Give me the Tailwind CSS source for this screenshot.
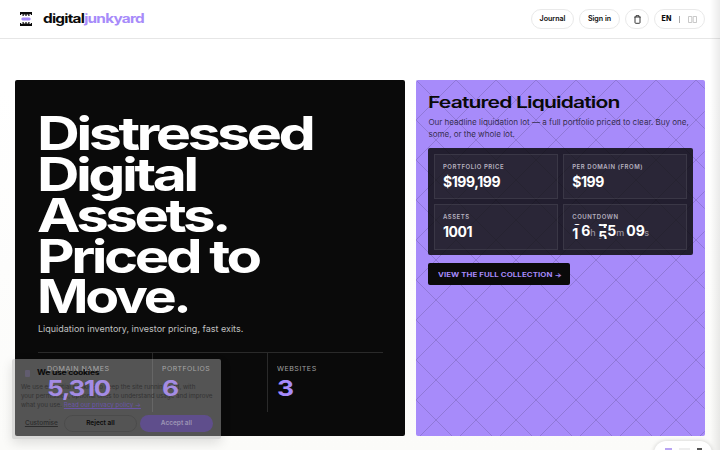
<!DOCTYPE html>
<html lang="en">
<head>
    <meta charset="UTF-8">
    <meta name="viewport" content="width=device-width, initial-scale=1.0">
    <title>digitaljunkyard</title>
    <script src="https://cdn.jsdelivr.net/npm/@tailwindcss/browser@4"></script>
</head>
<body class="h-[450px] overflow-hidden font-['Inter',sans-serif] text-[#0a0a0a]">
    <div class="relative h-[450px] overflow-hidden bg-linear-to-b from-white from-20% to-[#fbfbf9]">
        <!-- Header -->
        <header class="flex h-[39px] items-center justify-between border-b border-[#e6e6e6] bg-white pl-5 pr-[15px]">
            <a class="flex items-center">
                <svg class="h-[14px] w-3" viewBox="0 0 12 14">
                    <path d="M0 0h12v3h-1.200V2H9.500v2H8.300V2.500H6.600V4H5.400V2.500H3.700V4H2.500V2H1.200v1H0z" fill="#0a0a0a"/>
                    <path d="M0 14h12v-3h-1.200v1H9.500v-2H8.300v1.500H6.600V10H5.400v1.500H3.700V10H2.500v2H1.200v-1H0z" fill="#0a0a0a"/>
                    <path d="M2.500 5.600h7L11 7 9.500 8.400h-7L1 7z" fill="#a78bfa"/>
                </svg>
                <span class="ml-[11px] inline-block origin-left scale-x-[1.23] whitespace-nowrap text-[12.500px] font-bold leading-none tracking-[-0.05em]">digital<span class="text-[#a78bfa]">junkyard</span></span>
            </a>
            <nav class="flex items-center gap-[5px] text-[7.100px] font-semibold">
                <a class="flex h-5 w-[43px] items-center justify-center rounded-full border border-[#e9e9e9]">Journal</a>
                <a class="flex h-5 w-[41px] items-center justify-center rounded-full border border-[#e9e9e9]">Sign in</a>
                <a class="flex h-5 w-6 items-center justify-center rounded-full border border-[#e9e9e9]">
                    <svg class="h-[9px] w-[7px]" viewBox="0 0 7 9" fill="none" stroke="#222" stroke-width="0.9"><path d="M.3 2h6.400M2 2V.7h3V2M1 2v5.500q0 .8.800.8h3.400q.8 0 .8-.8V2"/></svg>
                </a>
                <div class="flex h-5 w-[51px] items-center justify-center rounded-full border border-[#e9e9e9]">
                    <span class="font-extrabold">EN</span>
                    <span class="ml-[8px] h-[7px] w-px bg-[#aaa]"></span>
                    <svg class="ml-[8px] h-[7px] w-[9px]" viewBox="0 0 9 7" fill="none" stroke="#bbb" stroke-width="0.800"><path d="M.5.500h3.300v6H.5zM5.200.500h3.300v6H5.200z"/></svg>
                </div>
            </nav>
        </header>

        <main class="flex gap-[11px] px-[15px] pt-[41.400px]">
            <!-- Hero -->
            <section class="h-[356px] w-[390.400px] rounded-[2px] bg-[#0a0a0a] px-[23px] pt-[33px] text-white">
                <h1 class="-ml-px text-[46.500px] font-bold leading-[40.700px] tracking-[-0.06em]">
                    <span class="block w-max origin-left scale-x-[1.275]">Distressed</span>
                    <span class="block w-max origin-left scale-x-[1.265]">Digital</span>
                    <span class="block w-max origin-left scale-x-[1.25]">Assets.</span>
                    <span class="block w-max origin-left scale-x-[1.25]">Priced to</span>
                    <span class="block w-max origin-left scale-x-[1.19]">Move.</span>
                </h1>
                <p class="mt-[6px] text-[9px] leading-3 text-[#c0c0c0]">Liquidation inventory, investor pricing, fast exits.</p>
                <dl class="mt-[17px] grid h-[60px] w-[345px] grid-cols-3 border-t border-[#2a2a2a]">
                    <div class="border-r border-[#2a2a2a] pl-[9px] pt-[12px]">
                        <dt class="relative z-10 w-max origin-left scale-x-[1.09] text-[6.500px] leading-2 tracking-[0.07em] text-[#a8a8a8]">DOMAIN NAMES</dt>
                        <dd class="relative z-10 mt-[3px] w-max origin-left scale-x-[1.18] text-[22px] font-bold leading-6 tracking-[-0.05em] text-[#a48ce4]">5,310</dd>
                    </div>
                    <div class="border-r border-[#2a2a2a] pl-[9px] pt-[12px]">
                        <dt class="relative z-10 w-max origin-left scale-x-[1.06] text-[6.500px] leading-2 tracking-[0.07em] text-[#a8a8a8]">PORTFOLIOS</dt>
                        <dd class="relative z-10 mt-[3px] w-max origin-left scale-x-[1.2] text-[22px] font-bold leading-6 tracking-[-0.05em] text-[#a48ce4]">6</dd>
                    </div>
                    <div class="pl-[9px] pt-[12px]">
                        <dt class="w-max origin-left scale-x-[1.09] text-[6.500px] leading-2 tracking-[0.07em] text-[#a0a0a0]">WEBSITES</dt>
                        <dd class="mt-[3px] w-max origin-left scale-x-[1.2] text-[22px] font-bold leading-6 tracking-[-0.05em] text-[#a78bfa]">3</dd>
                    </div>
                </dl>
            </section>

            <!-- Featured lot -->
            <section class="relative h-[356px] w-[288.600px] overflow-hidden rounded-[2px] bg-[#a78bfa]">
                <svg class="absolute inset-0 h-full w-full">
                    <pattern id="mesh" width="40" height="40" patternUnits="userSpaceOnUse">
                        <path d="M0 0l40 40M40 0L0 40" stroke="#0a0a0a" stroke-opacity="0.140"/>
                    </pattern>
                    <rect width="100%" height="100%" fill="url(#mesh)"/>
                </svg>
                <div class="relative px-3 pt-[12px]">
                    <h2 class="w-max origin-left scale-x-[1.315] text-[16px] font-semibold leading-5 tracking-[-0.04em]">Featured Liquidation</h2>
                    <p class="mt-[4px] whitespace-nowrap text-[8.100px] leading-3 tracking-[-0.004em] text-[#0a0a0a]/75">Our headline liquidation lot — a full portfolio priced to clear. Buy one,<br>some, or the whole lot.</p>
                    <div class="mt-2 grid h-[107px] grid-cols-2 gap-[5px] rounded-[2px] bg-[#0a0a0a]/85 p-[5.500px]">
                        <div class="border border-white/8 bg-white/4 pl-2 pt-[8px]">
                            <p class="text-[6px] font-semibold leading-2 tracking-[0.09em] text-[#b5b0bf]">PORTFOLIO PRICE</p>
                            <p class="mt-[2px] text-[14px] font-bold leading-[18px] tracking-[-0.03em] text-white">$199,199</p>
                        </div>
                        <div class="border border-white/8 bg-white/4 pl-2 pt-[8px]">
                            <p class="text-[6px] font-semibold leading-2 tracking-[0.09em] text-[#b5b0bf]">PER DOMAIN (FROM)</p>
                            <p class="mt-[2px] text-[14px] font-bold leading-[18px] tracking-[-0.03em] text-white">$199</p>
                        </div>
                        <div class="border border-white/8 bg-white/4 pl-2 pt-[8px]">
                            <p class="text-[6px] font-semibold leading-2 tracking-[0.09em] text-[#b5b0bf]">ASSETS</p>
                            <p class="mt-[2px] text-[14px] font-bold leading-[18px] tracking-[-0.03em] text-white">1001</p>
                        </div>
                        <div class="border border-white/8 bg-white/4 pl-2 pt-[8px]">
                            <p class="text-[6px] font-semibold leading-2 tracking-[0.09em] text-[#b5b0bf]">COUNTDOWN</p>
                            <!-- Rolling digits: each cell clips a two-digit column -->
                            <div class="mt-[3px] flex h-[15px] text-[14px] font-bold leading-[14px] text-white">
                                <span class="h-[15px] w-[9px] overflow-hidden"><span class="-mt-[11px] block">0<br>1</span></span>
                                <span class="w-[9px]">6</span>
                                <span class="w-[8px] pt-[2px] text-[9px] font-medium text-[#98929f]">h</span>
                                <span class="h-[15px] w-[9px] overflow-hidden"><span class="-mt-[8px] block">4<br>5</span></span>
                                <span class="w-[9px]">5</span>
                                <span class="w-[10px] pt-[2px] text-[9px] font-medium text-[#98929f]">m</span>
                                <span class="w-[18px]">09</span>
                                <span class="pt-[2px] text-[9px] font-medium text-[#98929f]">s</span>
                            </div>
                        </div>
                    </div>
                    <a class="mt-2 flex h-[22px] w-[142px] items-center rounded-[2px] bg-[#0a0a0a] pl-[9.500px] text-[#a78bfa]">
                        <span class="origin-left scale-x-[1.27] whitespace-nowrap text-[6.200px] font-bold tracking-[0.01em]">VIEW THE FULL COLLECTION →</span>
                    </a>
                </div>
            </section>
        </main>

        <!-- Cookie notice, fading in -->
        <aside class="absolute left-[12.400px] top-[359.400px] h-[80px] w-[209px] rounded-[2px] bg-[#b0b0b0]/45 px-[8.500px] pt-2 shadow-[0_4px_12px_rgba(0,0,0,0.12)]">
            <div class="flex h-[13px] items-center gap-[7px] pl-1">
                <span class="h-[7px] w-[5px] rounded-[1px] bg-[#6d6389]/50"></span>
                <h3 class="relative z-20 origin-left scale-x-[1.18] whitespace-nowrap text-[7.300px] font-bold tracking-[-0.03em]">We use cookies</h3>
            </div>
            <p class="mt-[3px] whitespace-nowrap text-[6.250px] leading-[9px] text-[#333]">We use essential cookies to keep the site running and, with<br>your permission, optional ones to understand usage and improve<br>what you use. <a class="text-[#6a55a8] underline">Read our privacy policy →</a></p>
            <div class="mt-[5px] flex h-[17px] items-center text-[6.500px] font-semibold">
                <a class="w-[43px] pl-1 font-medium text-[#2c2c2c] underline">Customise</a>
                <button class="h-[17px] w-[73px] rounded-full border border-black/10">Reject all</button>
                <button class="ml-[3px] h-[17px] w-[73px] rounded-full bg-[#5f4e8c] text-[#9c94b4]">Accept all</button>
            </div>
        </aside>

        <!-- Floating toolbar -->
        <div class="absolute left-[654px] top-[441px] flex h-6 w-[58px] items-start gap-[7px] rounded-full bg-white pl-[11px] pt-[7px] shadow-[0_0_4px_rgba(0,0,0,0.18)]">
            <span class="h-2 w-[7px] bg-[#b9a5f3]"></span>
            <span class="h-2 w-[11px] bg-[#eee]"></span>
            <span class="h-2 w-[5px] bg-[#555]"></span>
        </div>
        <div class="absolute right-0 top-0 h-full w-[10px] bg-linear-to-r from-transparent to-black/8"></div>
    </div>
</body>
</html>
